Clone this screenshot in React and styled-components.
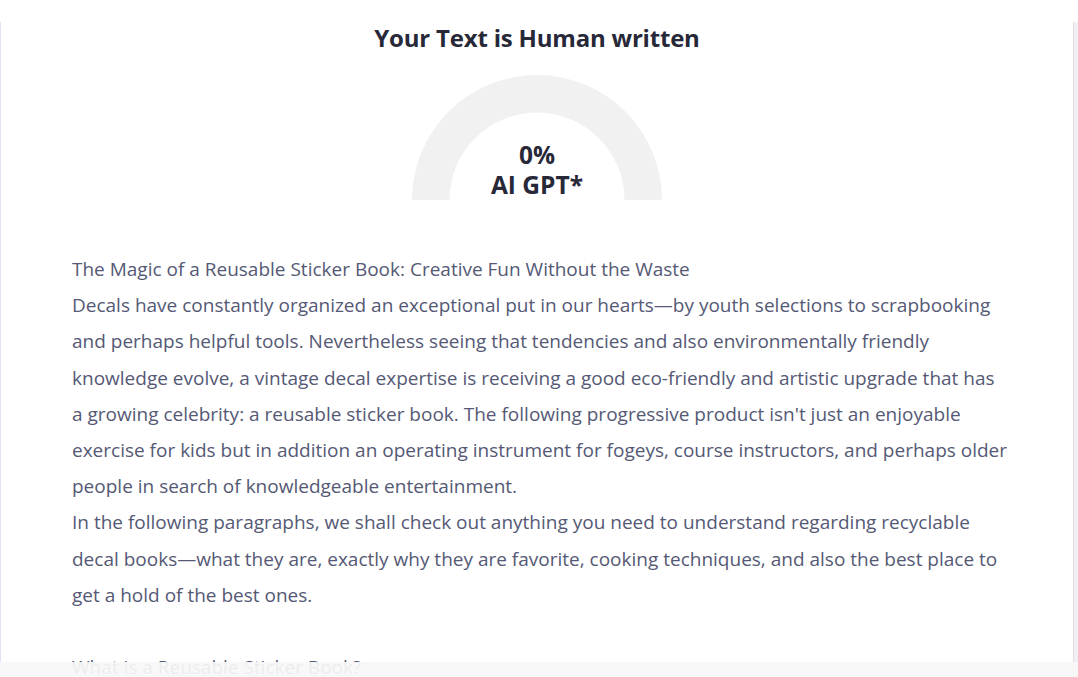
import React from "react";
import styled, { createGlobalStyle } from "styled-components";

const Global = createGlobalStyle`
  html, body { margin: 0; padding: 0; background: #ffffff; }
  body { font-family: "Open Sans", "Noto Sans", sans-serif; overflow: hidden; }
`;

const Page = styled.div`
  display: flex;
  padding-top: 22px;
  height: 677px;
  box-sizing: border-box;
  overflow: hidden;
`;

const Card = styled.main`
  flex: 1;
  border-left: 1px solid #e2e2f6;
  border-right: 1px solid #dedee2;
  background: #fff;
  display: flex;
  flex-direction: column;
  align-items: center;
`;

const Rail = styled.div`
  width: 4px;
  background: #efeff4;
`;

const Title = styled.h1`
  margin: 0;
  font-size: 24px;
  line-height: 32px;
  font-weight: 700;
  color: #272838;
  letter-spacing: -0.2px;
`;

const Gauge = styled.div`
  position: relative;
  width: 250px;
  height: 125px;
  margin-top: 21px;
`;

const GaugeLabel = styled.div`
  position: absolute;
  left: 0;
  right: 0;
  bottom: 0;
  display: flex;
  flex-direction: column;
  align-items: center;
  font-size: 24.5px;
  line-height: 30px;
  font-weight: 700;
  color: #272838;
`;

const Body = styled.article`
  align-self: stretch;
  margin-top: 51px;
  padding: 0 64px 0 71px;
  font-size: 19px;
  line-height: 36.2px;
  color: #555975;
`;

const Line = styled.p`
  margin: 0;
  min-height: ${(p) => (p.$blank ? "36.2px" : "0")};
`;

const BottomBar = styled.div`
  position: fixed;
  left: 0;
  right: 0;
  bottom: 0;
  height: 15px;
  background: rgba(247, 247, 247, 0.93);
`;

export default function App() {
  return (
    <>
      <Global />
      <Page>
        <Card>
          <Title>Your Text is Human written</Title>
          <Gauge>
            <svg width="250" height="125" viewBox="0 0 250 125">
              <path
                d="M0 125 A125 125 0 0 1 250 125 L212.5 125 A87.5 87.5 0 0 0 37.5 125 Z"
                fill="#f1f1f1"
              />
            </svg>
            <GaugeLabel>
              <span>0%</span>
              <span>AI GPT*</span>
            </GaugeLabel>
          </Gauge>
          <Body>
            <Line>The Magic of a Reusable Sticker Book: Creative Fun Without the Waste</Line>
            <Line>
              Decals have constantly organized an exceptional put in our hearts—by youth selections to scrapbooking and perhaps helpful tools. Nevertheless seeing that tendencies and also environmentally friendly knowledge evolve, a vintage decal expertise is receiving a good eco-friendly and artistic upgrade that has a growing celebrity: a reusable sticker book. The following progressive product isn't just an enjoyable exercise for kids but in addition an operating instrument for fogeys, course instructors, and perhaps older people in search of knowledgeable entertainment.
            </Line>
            <Line>
              In the following paragraphs, we shall check out anything you need to understand regarding recyclable decal books—what they are, exactly why they are favorite, cooking techniques, and also the best place to get a hold of the best ones.
            </Line>
            <Line $blank />
            <Line>What is a Reusable Sticker Book?</Line>
          </Body>
        </Card>
        <Rail />
      </Page>
      <BottomBar />
    </>
  );
}
